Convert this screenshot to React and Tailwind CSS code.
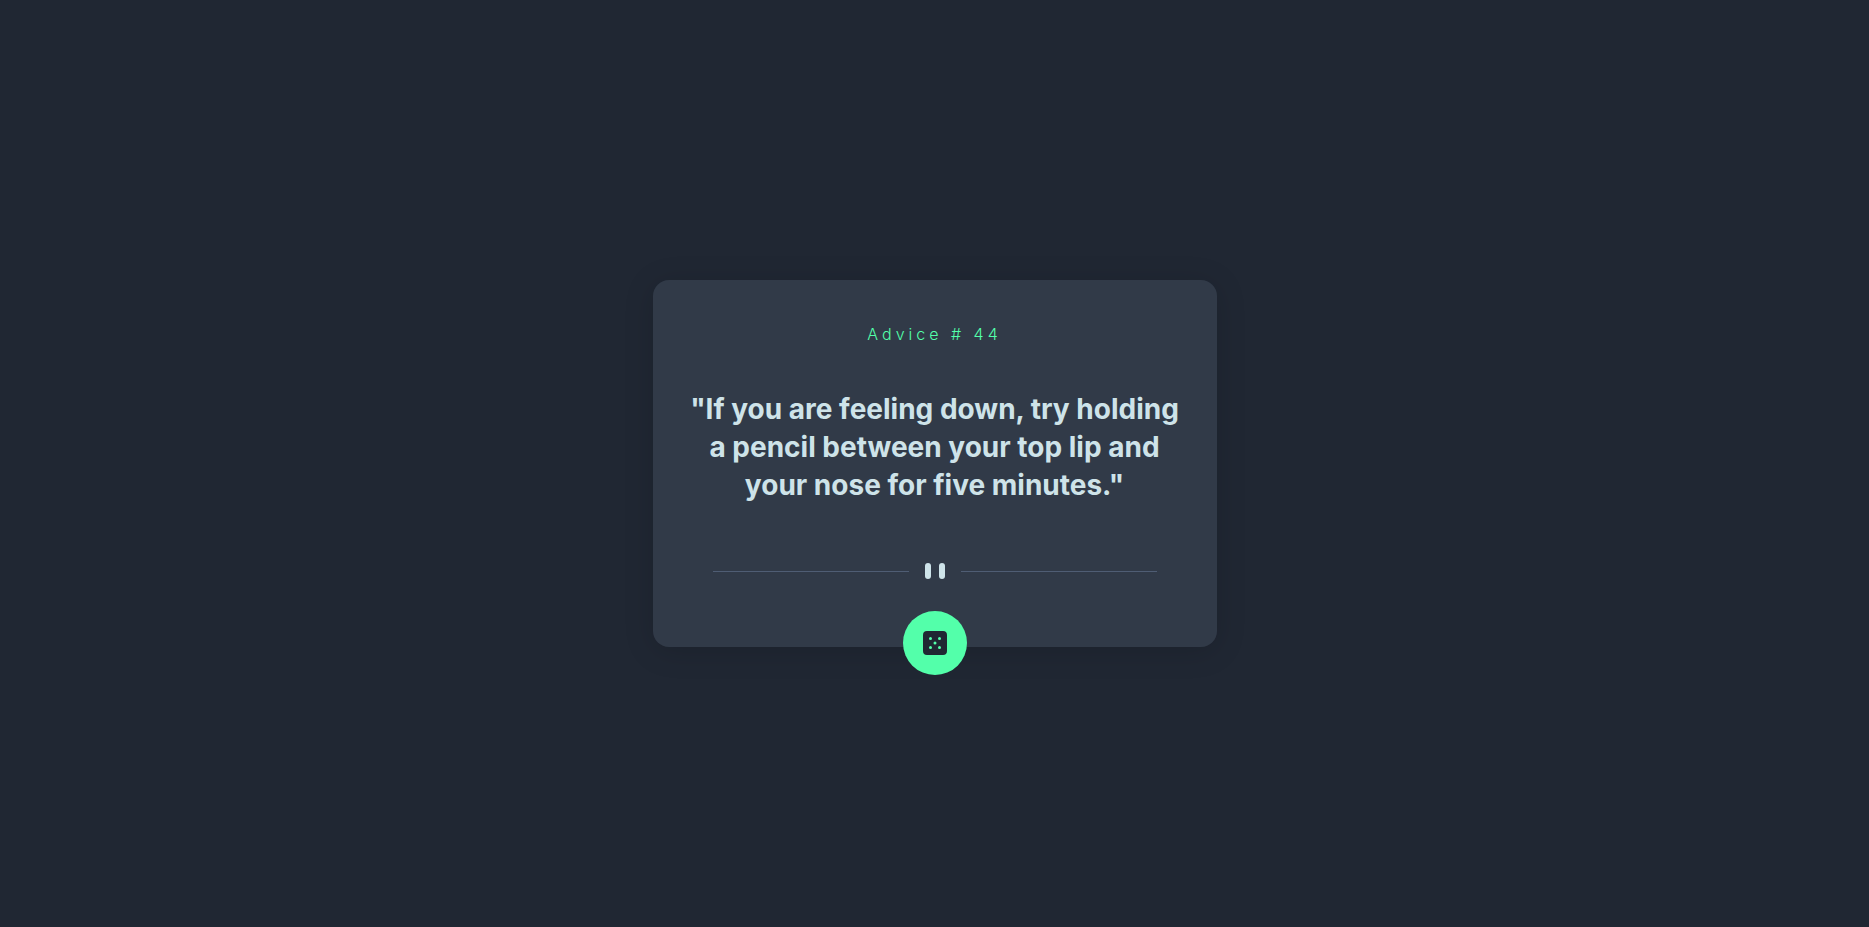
function Divider() {
  return (
    <svg viewBox="0 0 444 16" className="mt-[59px] h-4 w-full max-w-[444px]" aria-hidden="true">
      <path fill="#4f5d74" d="M0 8h196v1H0zM248 8h196v1H248z" />
      <g fill="#cee3e9">
        <rect x="212" width="6" height="16" rx="3" />
        <rect x="226" width="6" height="16" rx="3" />
      </g>
    </svg>
  );
}

function DiceIcon() {
  return (
    <svg width="24" height="24" viewBox="0 0 24 24" aria-hidden="true">
      <path
        fill="#202733"
        d="M20 0H4a4.005 4.005 0 0 0-4 4v16a4.005 4.005 0 0 0 4 4h16a4.005 4.005 0 0 0 4-4V4a4.005 4.005 0 0 0-4-4ZM7.500 18a1.500 1.500 0 1 1 0-3 1.500 1.500 0 0 1 0 3Zm0-9a1.500 1.500 0 1 1 0-3 1.500 1.500 0 0 1 0 3Zm4.500 4.500a1.500 1.500 0 1 1 0-3 1.500 1.500 0 0 1 0 3Zm4.500 4.500a1.500 1.500 0 1 1 0-3 1.500 1.500 0 0 1 0 3Zm0-9a1.500 1.500 0 1 1 0-3 1.500 1.500 0 0 1 0 3Z"
      />
    </svg>
  );
}

export default function App() {
  return (
    <main className="flex min-h-screen items-center justify-center bg-[#202733] p-4 font-['Inter',sans-serif]">
      <section className="relative flex w-full max-w-[564px] flex-col items-center rounded-2xl bg-[#313a48] px-8 pt-[42px] pb-17 text-center shadow-[0_4px_30px_rgba(0,0,0,0.15)]">
        <h1 className="text-base leading-6 font-light tracking-[4px] text-[#53ffaa]">Advice # 44</h1>
        <p className="mt-11 text-[28px] leading-[38px] font-bold text-[#cee3e9]">
          "If you are feeling down, try holding
          <br />a pencil between your top lip and
          <br />
          your nose for five minutes."
        </p>
        <Divider />
        <button
          type="button"
          aria-label="New advice"
          className="absolute -bottom-7 flex size-16 cursor-pointer items-center justify-center rounded-full bg-[#53ffaa]"
        >
          <DiceIcon />
        </button>
      </section>
    </main>
  );
}
